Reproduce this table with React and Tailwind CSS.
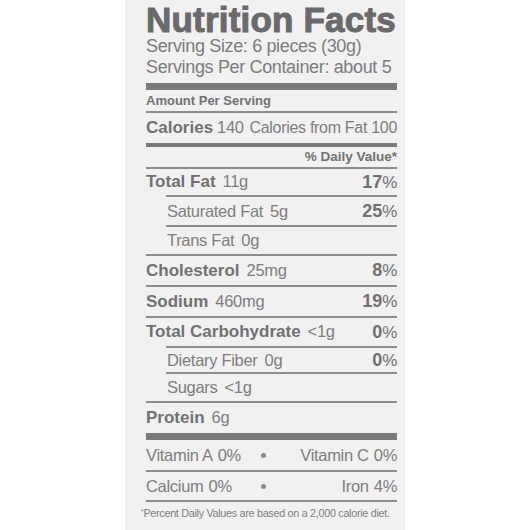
import React from 'react';

const NARROW = "font-['Liberation_Sans',Arial,sans-serif] tracking-[-0.3px]";
const BOLD = "font-['Liberation_Sans',Arial,sans-serif] font-bold";

const Line = ({ indent }) => (
  <div className={indent ? 'ml-[20px] h-[2px] bg-[#8d8d8d]' : 'h-[2px] bg-[#8d8d8d]'} />
);

const Pct = ({ value }) => (
  <span className="text-[#707070] whitespace-nowrap">
    <span className={`${BOLD} text-[18px]`}>{value}</span>
    <span className={`${NARROW} text-[17px]`}>%</span>
  </span>
);

const Nutrient = ({ label, amount, pct, bold, indent, h }) => (
  <div className="flex items-center justify-between" style={{ height: h }}>
    <div className={indent ? 'flex items-baseline pl-[21px]' : 'flex items-baseline'}>
      {bold ? (
        <span className={`${BOLD} text-[17px] text-[#727272]`}>{label}</span>
      ) : (
        <span className={`${NARROW} text-[16.5px] text-[#7e7e7e]`}>{label}</span>
      )}
      <span className={`${NARROW} text-[16.5px] text-[#7e7e7e] ml-[7px]`}>{amount}</span>
    </div>
    {pct && <Pct value={pct} />}
  </div>
);

export default function App() {
  return (
    <div className="w-[530px] h-[530px] bg-white overflow-hidden">
      <div className="mx-auto w-[280px] h-[530px] bg-[#f1f1f1] pl-[21px] pr-[8px] pt-[4px]">
        <h1 className={`${BOLD} text-[35px] leading-[32px] text-[#6a6a6a] tracking-[0.2px] [-webkit-text-stroke:1px_#6a6a6a] whitespace-nowrap`}>
          Nutrition Facts
        </h1>
        <div className={`${NARROW} tracking-[-0.35px] text-[18px] leading-[21px] text-[#7c7c7c] whitespace-nowrap`}>
          <div>Serving Size: 6 pieces (30g)</div>
          <div>Servings Per Container: about 5</div>
        </div>
        <div className="mt-[5px] h-[7px] bg-[#7a7a7a]" />
        <div className={`${BOLD} text-[13px] leading-[21px] text-[#727272]`}>Amount Per Serving</div>
        <Line />
        <div className="flex items-center justify-between h-[30px] whitespace-nowrap">
          <div className="flex items-baseline">
            <span className={`${BOLD} text-[17px] text-[#727272]`}>Calories</span>
            <span className={`${NARROW} text-[16.5px] text-[#7e7e7e] ml-[4px]`}>140</span>
          </div>
          <span className={`${NARROW} text-[16px] text-[#7e7e7e]`}>Calories from Fat 100</span>
        </div>
        <div className="h-[4px] bg-[#7a7a7a]" />
        <div className={`${BOLD} text-[13.5px] leading-[20px] text-right text-[#727272]`}>% Daily Value*</div>
        <Line />
        <Nutrient label="Total Fat" amount="11g" pct="17" bold h={26} />
        <Line indent />
        <Nutrient label="Saturated Fat" amount="5g" pct="25" indent h={28} />
        <Line indent />
        <Nutrient label="Trans Fat" amount="0g" indent h={27} />
        <Line />
        <Nutrient label="Cholesterol" amount="25mg" pct="8" bold h={29} />
        <Line />
        <Nutrient label="Sodium" amount="460mg" pct="19" bold h={29} />
        <Line />
        <Nutrient label="Total Carbohydrate" amount="<1g" pct="0" bold h={28} />
        <Line indent />
        <Nutrient label="Dietary Fiber" amount="0g" pct="0" indent h={24} />
        <Line indent />
        <Nutrient label="Sugars" amount="<1g" indent h={27} />
        <Line />
        <Nutrient label="Protein" amount="6g" bold h={30} />
        <div className="h-[7px] bg-[#7a7a7a]" />
        <div className={`${NARROW} text-[16.5px] text-[#7e7e7e] whitespace-nowrap`}>
          <div className="flex items-center h-[30px]">
            <div className="w-[115px] flex">
              <span>Vitamin A</span>
              <span className="ml-[5px]">0%</span>
            </div>
            <div className="w-[5px] h-[5px] rounded-full bg-[#8a8a8a]" />
            <div className="flex-1 flex justify-end">
              <span>Vitamin C</span>
              <span className="ml-[5px]">0%</span>
            </div>
          </div>
          <Line />
          <div className="flex items-center h-[28px]">
            <div className="w-[115px] flex">
              <span>Calcium</span>
              <span className="ml-[5px]">0%</span>
            </div>
            <div className="w-[5px] h-[5px] rounded-full bg-[#8a8a8a]" />
            <div className="flex-1 flex justify-end">
              <span>Iron</span>
              <span className="ml-[5px]">4%</span>
            </div>
          </div>
          <Line />
        </div>
        <div className={`${NARROW} tracking-[-0.1px] text-[10.8px] leading-[22px] text-[#7e7e7e] -ml-[5px] whitespace-nowrap`}>
          <sup className="text-[7px]">*</sup>Percent Daily Values are based on a 2,000 calorie diet.
        </div>
      </div>
    </div>
  );
}
